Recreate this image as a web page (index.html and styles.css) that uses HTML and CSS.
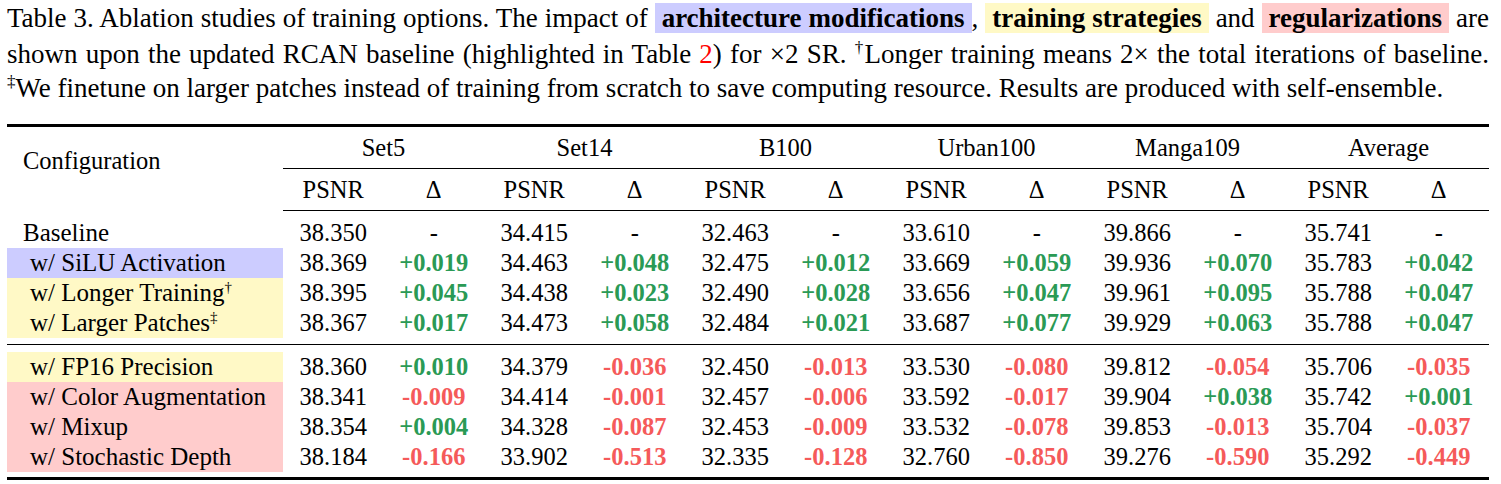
FILE: index.html
```html
<!DOCTYPE html>
<html>
<head>
<meta charset="utf-8">
<link rel="stylesheet" href="styles.css">
</head>
<body>
<div class="page">
  <div class="caption">
    <span class="line l1 just">Table 3. Ablation studies of training options. The impact of <span class="hl blue">architecture modifications</span>, <span class="hl yellow">training strategies</span> and <span class="hl pink">regularizations</span> are</span>
    <span class="line just">shown upon the updated RCAN baseline (highlighted in Table <span class="ref">2</span>) for ×2 SR. <sup>†</sup>Longer training means 2× the total iterations of baseline.</span>
    <span class="line"><sup>‡</sup>We finetune on larger patches instead of training from scratch to save computing resource. Results are produced with self-ensemble.</span>
  </div>

  <table class="results">
    <colgroup>
      <col class="c-conf">
      <col><col><col><col><col><col><col><col><col><col><col><col>
    </colgroup>
    <thead>
      <tr class="h1">
        <th rowspan="2" class="conf-head">Configuration</th>
        <th colspan="2">Set5</th>
        <th colspan="2">Set14</th>
        <th colspan="2">B100</th>
        <th colspan="2">Urban100</th>
        <th colspan="2">Manga109</th>
        <th colspan="2">Average</th>
      </tr>
      <tr class="h2">
        <th>PSNR</th><th>Δ</th>
        <th>PSNR</th><th>Δ</th>
        <th>PSNR</th><th>Δ</th>
        <th>PSNR</th><th>Δ</th>
        <th>PSNR</th><th>Δ</th>
        <th>PSNR</th><th>Δ</th>
      </tr>
    </thead>
    <tbody class="block first">
      <tr class="gap top"><td colspan="13"></td></tr>
      <tr>
        <td class="conf base">Baseline</td>
        <td>38.350</td><td>-</td><td>34.415</td><td>-</td><td>32.463</td><td>-</td><td>33.610</td><td>-</td><td>39.866</td><td>-</td><td>35.741</td><td>-</td>
      </tr>
      <tr>
        <td class="conf blue">w/ SiLU Activation</td>
        <td>38.369</td><td class="up">+0.019</td><td>34.463</td><td class="up">+0.048</td><td>32.475</td><td class="up">+0.012</td><td>33.669</td><td class="up">+0.059</td><td>39.936</td><td class="up">+0.070</td><td>35.783</td><td class="up">+0.042</td>
      </tr>
      <tr>
        <td class="conf yellow">w/ Longer Training<sup>†</sup></td>
        <td>38.395</td><td class="up">+0.045</td><td>34.438</td><td class="up">+0.023</td><td>32.490</td><td class="up">+0.028</td><td>33.656</td><td class="up">+0.047</td><td>39.961</td><td class="up">+0.095</td><td>35.788</td><td class="up">+0.047</td>
      </tr>
      <tr>
        <td class="conf yellow">w/ Larger Patches<sup>‡</sup></td>
        <td>38.367</td><td class="up">+0.017</td><td>34.473</td><td class="up">+0.058</td><td>32.484</td><td class="up">+0.021</td><td>33.687</td><td class="up">+0.077</td><td>39.929</td><td class="up">+0.063</td><td>35.788</td><td class="up">+0.047</td>
      </tr>
      <tr class="gap bottom-mid"><td colspan="13"></td></tr>
    </tbody>
    <tbody class="block second">
      <tr class="gap top"><td colspan="13"></td></tr>
      <tr>
        <td class="conf yellow">w/ FP16 Precision</td>
        <td>38.360</td><td class="up">+0.010</td><td>34.379</td><td class="down">-0.036</td><td>32.450</td><td class="down">-0.013</td><td>33.530</td><td class="down">-0.080</td><td>39.812</td><td class="down">-0.054</td><td>35.706</td><td class="down">-0.035</td>
      </tr>
      <tr>
        <td class="conf pink">w/ Color Augmentation</td>
        <td>38.341</td><td class="down">-0.009</td><td>34.414</td><td class="down">-0.001</td><td>32.457</td><td class="down">-0.006</td><td>33.592</td><td class="down">-0.017</td><td>39.904</td><td class="up">+0.038</td><td>35.742</td><td class="up">+0.001</td>
      </tr>
      <tr>
        <td class="conf pink">w/ Mixup</td>
        <td>38.354</td><td class="up">+0.004</td><td>34.328</td><td class="down">-0.087</td><td>32.453</td><td class="down">-0.009</td><td>33.532</td><td class="down">-0.078</td><td>39.853</td><td class="down">-0.013</td><td>35.704</td><td class="down">-0.037</td>
      </tr>
      <tr>
        <td class="conf pink">w/ Stochastic Depth</td>
        <td>38.184</td><td class="down">-0.166</td><td>33.902</td><td class="down">-0.513</td><td>32.335</td><td class="down">-0.128</td><td>32.760</td><td class="down">-0.850</td><td>39.276</td><td class="down">-0.590</td><td>35.292</td><td class="down">-0.449</td>
      </tr>
      <tr class="gap bottom-end"><td colspan="13"></td></tr>
    </tbody>
  </table>
</div>
</body>
</html>
```

FILE: styles.css
```css
html, body {
  margin: 0;
  padding: 0;
  background: #ffffff;
}

.page {
  padding: 0 0 0 7px;
  width: 1482px;
  font-family: "Liberation Serif", "Times New Roman", serif;
  color: #000;
}

/* ---------- caption ---------- */
.caption {
  font-size: 27px;
  line-height: 34px;
}

.caption .line {
  display: block;
  white-space: nowrap;
}

.caption .line.just {
  white-space: normal;
  text-align: justify;
  text-align-last: justify;
}

.caption .l1 {
  line-height: 37px;
}

.caption sup {
  font-size: 17px;
  line-height: 0;
  vertical-align: 10px;
}

.hl {
  font-weight: bold;
  padding: 0 7px;
}

.blue { background: #ccccff; }
.yellow { background: #fff9c6; }
.pink { background: #ffcccc; }

.ref { color: #ff0000; }

/* ---------- table ---------- */
.results {
  margin-top: 19px;
  width: 1482px;
  table-layout: fixed;
  border-collapse: collapse;
  border-top: 3px solid #000;
  border-bottom: 3px solid #000;
  font-size: 24.5px;
}

.results col.c-conf { width: 276px; }

.results th,
.results td {
  padding: 0;
  text-align: center;
  font-weight: normal;
  white-space: nowrap;
}

.results .h1 th {
  height: 41px;
  line-height: 41px;
}

.results .h1 th:not(.conf-head) {
  border-bottom: 1px solid #000;
}

.results .h2 th {
  height: 41px;
  line-height: 41px;
  border-bottom: 1px solid #000;
}

.results .conf-head {
  text-align: left;
  padding-left: 16px;
  padding-bottom: 16px;
  vertical-align: middle;
  line-height: 30px;
}

.results tbody tr td {
  height: 30px;
  line-height: 30px;
}

.results tr.gap td {
  height: 7px;
  line-height: 0;
  font-size: 0;
}

.results tr.gap.bottom-mid td {
  height: 6px;
  border-bottom: 1px solid #000;
}

.results tr.gap.bottom-end td {
  height: 5px;
}

.results td.conf {
  text-align: left;
  padding-left: 23px;
  font-size: 25px;
}

.results td.conf.base {
  padding-left: 16px;
}

.results td.conf sup {
  font-size: 15px;
  line-height: 0;
  vertical-align: 9px;
}

.results .up {
  font-weight: bold;
  color: #2a9a55;
}

.results .down {
  font-weight: bold;
  color: #f55a5a;
}
```
